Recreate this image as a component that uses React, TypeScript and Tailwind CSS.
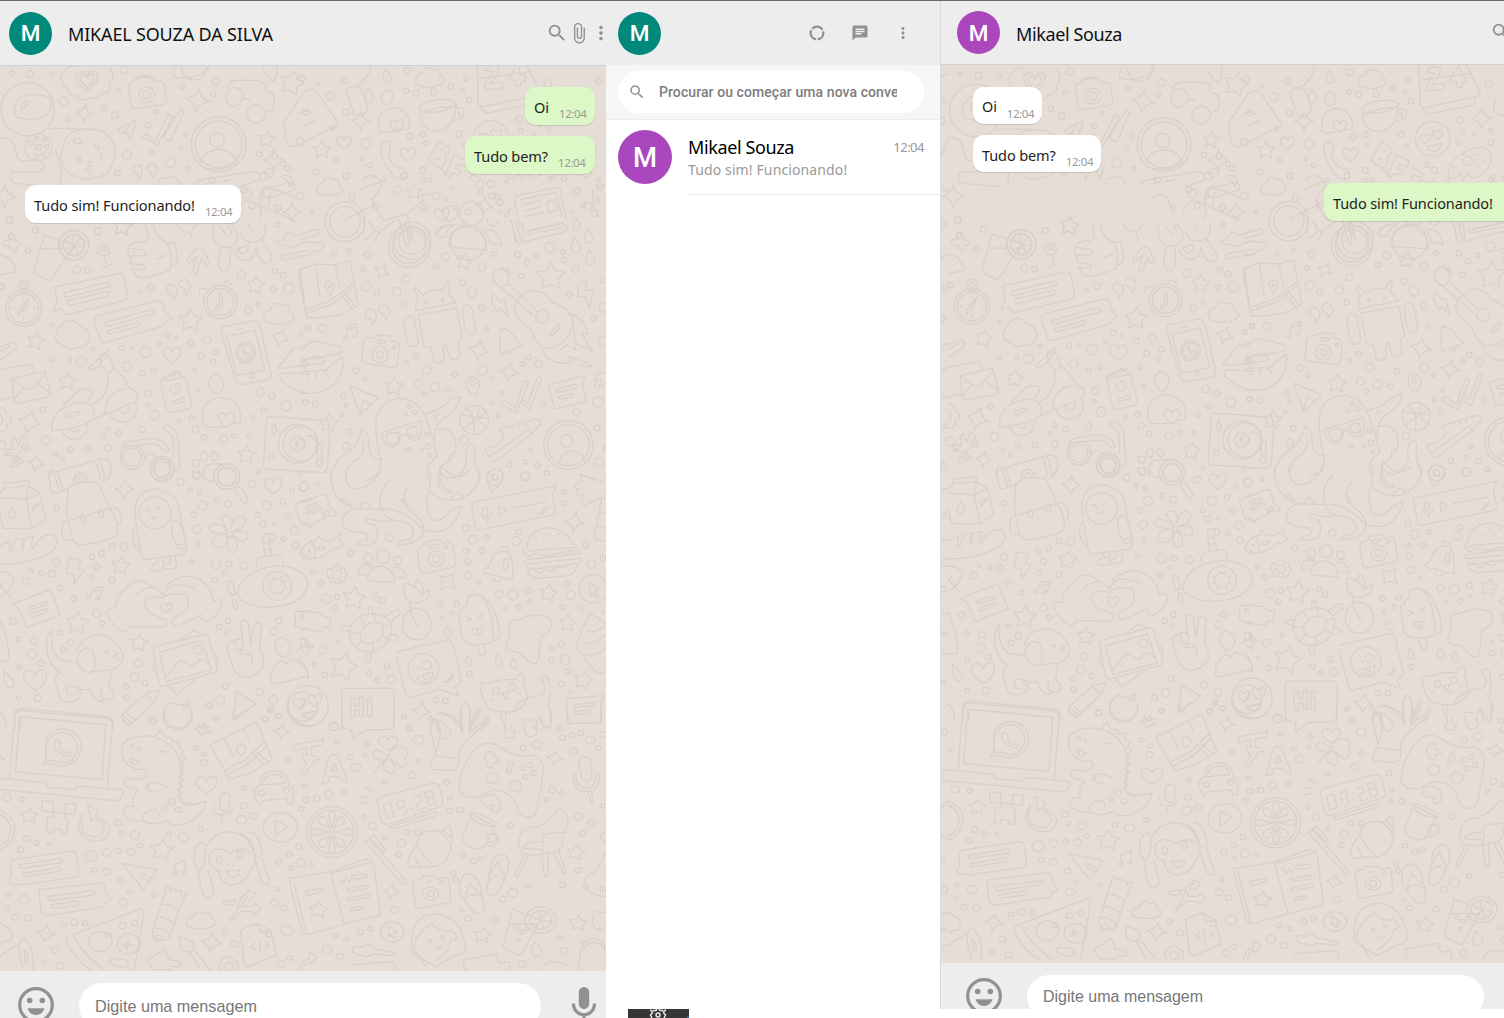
import React from "react";

/* ---------- doodle helpers ---------- */
const pt = (x: number, y: number, r: number, a: number) => `${(x + r * Math.cos(a)).toFixed(1)} ${(y + r * Math.sin(a)).toFixed(1)}`;
const star = (x: number, y: number, r: number, rot = 0) =>
  "M" + Array.from({ length: 10 }, (_, i) => pt(x, y, i % 2 ? r * 0.52 : r, ((i * 36 - 90 + rot) * Math.PI) / 180)).join("L") + "Z";
const spark = (x: number, y: number, r: number, rot = 0) => {
  const a = (d: number) => ((d + rot) * Math.PI) / 180;
  let d = "M" + pt(x, y, r, a(-90));
  for (let i = 0; i < 4; i++) d += `Q${pt(x, y, r * 0.25, a(-45 + i * 90))} ${pt(x, y, r, a(i * 90))}`;
  return d + "Z";
};
const heart = (x: number, y: number, s: number) =>
  `M${x} ${y + s}C${x - s * 0.7} ${y + s * 0.6} ${x - s * 1.2} ${y} ${x - s} ${y - s * 0.5}C${x - s * 0.7} ${y - s} ${x - s * 0.1} ${y - s * 0.8} ${x} ${y - s * 0.3}C${x + s * 0.2} ${y - s} ${x + s} ${y - s} ${x + s} ${y - s * 0.3}C${x + s} ${y + s * 0.2} ${x + s * 0.5} ${y + s * 0.7} ${x} ${y + s}Z`;
const drop = (x: number, y: number, s: number) =>
  `M${x - s * 0.2} ${y - s}Q${x + s * 0.7} ${y} ${x + s * 0.6} ${y + s * 0.4}A${s * 0.6} ${s * 0.6} 0 0 1 ${x - s * 0.6} ${y + s * 0.4}Q${x - s * 0.6} ${y - s * 0.2} ${x - s * 0.2} ${y - s}Z`;
const cloud = (x: number, y: number, s: number) =>
  `M${x - s} ${y + s * 0.5}Q${x - s * 1.1} ${y - s * 0.2} ${x - s * 0.6} ${y - s * 0.2}Q${x - s * 0.3} ${y - s * 0.9} ${x + s * 0.2} ${y - s * 0.5}Q${x + s * 0.7} ${y - s * 0.6} ${x + s * 0.7} ${y - s * 0.1}Q${x + s * 1.3} ${y + s * 0.3} ${x + s * 0.6} ${y + s * 0.6}Q${x - s * 0.2} ${y + s * 0.9} ${x - s} ${y + s * 0.5}Z`;

type Patch = { t: string; dots: string; paths: string[] };

const PATCHES: Patch[] = [
  {
    t: "translate(0 0) scale(.3333)",
    dots: "35 220 7,91 222 10,155 222 6,371 210 11,191 303 13,312 323 8,355 272 6,344 345 10,204 359 7,467 336 6,548 261 7,648 243 11,640 283 7,443 376 8,381 465 14,457 458 7,512 488 15,543 445 6,352 519 9,562 505 6,556 406 6,778 463 8,824 469 9,850 492 7,807 519 14,743 581 13,440 285 24,440 285 12,83 328 80,656 433 82,656 433 70,651 420 22,115 442 40,115 442 9,95 430 6,110 415 6,132 420 6,140 440 6,130 462 6,110 467 6,28 660 10,294 694 10,221 735 45,221 735 32,32 710 8",
    paths: [
      "M62 290Q95 275 150 292Q165 320 135 350Q95 365 50 352Q30 325 62 290M65 330Q62 308 80 302Q90 312 65 330",
      "M188 250Q175 225 195 212Q205 195 225 200M330 205Q350 235 328 250Q335 280 305 280Q295 300 270 292Q250 310 230 288Q205 290 205 265Q185 262 188 250",
      heart(262, 240, 32), heart(262, 240, 20),
      "M385 260Q383 248 400 246L405 235Q440 228 460 235L465 245Q490 238 494 255L500 300Q500 312 488 314L410 326Q395 328 393 315ZM412 240L410 230L450 226",
      "M545 200Q548 240 585 240Q615 240 620 200M530 197Q510 225 530 233Q590 240 625 205Q630 190 620 180",
      spark(592, 300, 36, 8), spark(254, 340, 26, 8),
      "M352 388L410 360L392 416L375 395L365 403ZM375 395L388 375",
      "M425 410L440 402L465 425L505 342L520 348L472 435ZM490 410L540 328L552 334L512 425L488 412",
      "M790 205Q795 230 823 244Q835 215 830 190",
      "M690 245Q760 235 790 248Q805 260 795 268M700 242L680 262M800 275L812 275L822 295M750 300Q738 290 730 300M800 335L818 330Q828 300 820 280M697 262Q722 262 730 285Q725 315 700 320Q675 312 677 285Q683 265 697 262M768 315Q795 318 798 342Q792 366 767 370Q740 362 740 340Q745 318 768 315",
      "M190 440Q178 465 187 490Q195 520 225 528Q255 545 285 533Q325 530 335 495Q352 465 340 430Q325 395 290 390Q250 382 220 395Q190 410 190 440",
      star(800, 418, 26, 8), star(875, 250, 38, 15), spark(14, 590, 34), star(368, 680, 30, 8),
      "M150 385Q250 385 285 390M0 415Q40 400 50 465Q45 490 115 480Q145 500 120 515L35 515Q20 540 45 550L150 560M165 450Q190 500 180 555",
      "M220 420Q240 410 248 425Q225 440 220 420M285 432Q295 425 298 445Q285 450 285 432M232 470Q245 470 245 485Q232 490 232 470M265 487Q275 480 275 500Q262 500 265 487M300 460Q310 465 300 480M255 510Q270 505 275 520",
      "M400 515Q395 490 420 497Q435 520 415 540Q420 525 400 515M440 510Q440 490 463 492Q480 515 455 535Q460 515 440 510",
      "M600 500Q600 455 656 448Q700 450 712 490Q660 520 605 500",
      "M580 555Q590 540 620 537L760 515Q785 515 780 540L720 560M620 552L650 545M660 545L690 540",
      "M780 590Q785 560 805 560L900 600M780 590L780 615L890 665M820 568Q800 590 808 620",
      "M480 555Q470 530 500 535Q520 520 530 540Q545 545 535 555",
      "M845 530Q850 520 870 530Q890 545 870 560Q870 545 845 530",
    ],
  },
  {
    // right half of the top band
    t: "translate(440 0) scale(.3333)",
    dots: "408 578 11,152 552 11,171 590 8,181 607 9,121 577 7,16 597 6,30 640 22,95 640 36,330 538 7,372 535 8,480 560 9,470 600 7,465 640 10,475 243 8,200 645 6,430 615 7",
    paths: [
      "M225 600Q222 590 235 587L340 563Q358 560 362 572L378 660M225 600L238 680M240 600L340 578Q350 578 352 590L366 650M250 615L300 603M255 632L305 620M258 650L310 637M320 605L345 600L352 632L328 638ZM205 640Q205 625 225 622M460 570Q450 610 470 640M470 565L498 552M0 505L20 520",
    ],
  },
  {
    t: "translate(356.5 -2.5) scale(.338)",
    dots: "150 217 10,279 264 8,324 240 7,333 304 8,315 276 6,148 277 7,176 283 9,158 410 9,197 404 8,204 431 6,303 403 9,320 438 6,28 432 15,17 476 6,40 496 7,196 511 9,198 542 6,481 361 10,487 394 7,475 427 7,566 254 11,524 404 5,572 392 7,573 427 9,398 416 52,503 482 14,380 495 7,403 510 9,580 532 6,165 720 55,165 720 40,330 725 52",
    paths: [
      drop(90, 230, 20), drop(38, 288, 20), drop(228, 278, 14),
      "M75 290Q90 262 108 285Q110 315 90 318Q70 312 75 290",
      cloud(218, 235, 42),
      "M357 195L360 315Q362 325 380 322L530 290Q545 285 538 270L500 195M360 240L512 220M365 320L375 335Q378 345 395 340L520 315Q530 310 525 295",
      "M378 215Q400 190 420 205Q425 225 395 255L430 250Q440 265 425 270L380 272Q375 250 405 220ZM450 240L478 195L485 230L498 230L500 248L485 250L485 262L472 262L470 248Z",
      "M187 335Q190 390 230 395Q290 395 296 315M187 335Q180 310 240 302Q290 298 296 315Q250 350 187 335M195 345Q230 320 292 322M296 330Q318 320 318 340Q318 365 285 362M300 340Q308 335 305 350",
      "M65 380Q62 330 110 325Q155 330 158 380Q155 395 135 390L80 400Q65 400 65 380", heart(120, 378, 20),
      heart(376, 415, 15), heart(413, 403, 15), "M382 440L425 430Q420 455 400 455Q385 450 382 440",
      spark(545, 354, 32), spark(12, 364, 28),
      "M75 430Q100 415 100 450Q90 460 105 490Q115 505 135 505Q155 515 145 535Q120 550 90 500Q65 460 75 430", heart(152, 462, 22),
      "M245 425L275 445Q280 460 262 468Q270 495 245 505L212 480ZM245 450L255 452M235 475L247 480M290 465L328 485L322 500L298 492L292 505L310 515L305 525L285 520L275 532L262 525ZM335 500L370 520L365 532L340 525L335 540",
      "M445 520Q450 470 510 450Q560 430 573 465Q575 520 520 535L505 520L490 540L478 520L465 535Q440 540 445 520M455 500L470 500M525 465L535 460M545 480L555 485M530 500L540 498M485 465L495 462",
      "M590 295Q575 310 585 335Q600 350 612 345M0 265Q45 230 42 195",
      "M20 540Q30 520 55 530Q80 545 75 560L45 600L60 610M10 570L30 560L75 545M0 640Q30 640 20 700M45 600L80 660L150 640L165 720M150 640L200 600L190 585L215 580M60 610L-30 655",
      "M140 670L165 715M240 700Q245 675 285 672M460 668L470 720M490 668L495 720M510 690L612 665",
    ],
  },
  {
    t: "translate(0 220) scale(.3333)",
    dots: "28 3 10,106 30 9,84 91 8,294 34 10,231 149 11,262 151 9,420 216 6,453 203 10,724 164 12,825 153 8,850 166 9,820 207 8,866 205 16,745 271 10,775 253 6,834 15 7,6 200 8,156 314 6,244 424 15,208 420 6,155 419 7,279 387 6,366 384 8,397 382 5,437 397 16,381 440 13,426 460 8,461 450 7,502 345 8,478 370 6,528 353 4,572 370 9,621 360 12,603 409 9,648 396 8,640 425 7,584 450 6,594 509 6,445 521 10,443 554 6,464 586 14,538 603 6,575 594 8,586 627 10,611 653 8,671 658 12,702 648 6,747 648 6,782 516 12,816 529 9,859 558 15,916 547 8,791 570 8,758 594 7,923 324 8,902 342 7,139 661 13,129 569 8,324 684 10,357 639 8,323 626 6,310 651 6,426 629 9,263 687 8,212 689 8,167 702 7,189 717 6,71 265 54,71 265 44,71 199 18,71 199 8,222 76 44,222 76 32,661 246 50,661 246 40,737 398 30,737 398 23,397 712 36,397 712 27,485 745 36,485 745 26,757 468 6,815 711 8,893 671 58,893 671 22,893 671 4,680 770 38,680 770 28,775 755 6,311 90 18,311 86 7,5 675 13",
    paths: [
      "M12 62L30 60L28 42Q38 35 45 48L48 64L62 66Q65 76 50 78L50 90Q40 100 34 88L30 78L12 78Q5 70 12 62",
      "M133 45L222 75L155 178Q150 185 140 180L105 162Q100 155 103 145ZM125 87L212 87M222 76L245 50M222 76L254 80M222 76L238 104M222 76L212 106M222 76L215 44M222 76L195 60",
      "M55 275L85 238L78 262L55 290ZM62 260L78 266M71 232L71 242M71 290L71 300M35 265L45 265M100 265L108 265",
      "M435 14Q455 60 430 65Q390 65 385 85Q380 110 395 112M392 85L432 92Q445 105 432 108L392 108Q385 130 398 132L430 135Q440 145 430 150L395 145L412 170L430 175Q455 170 510 150L515 110Q510 80 500 70Q465 50 460 14M500 70L525 68L533 120Q530 138 515 138M470 118L500 105",
      "M530 15Q540 35 570 38L578 60M590 15L578 30M312 105L322 140L335 132M322 140L305 142",
      "M562 118L590 85Q605 80 612 90L628 128Q625 140 615 132L605 115L590 160Q580 165 580 150L590 110L570 128Q560 130 562 118",
      "M640 15Q630 60 660 80Q700 90 712 60Q715 30 690 10M660 20L680 45M685 15L695 40M722 40Q735 80 780 60Q800 50 795 10M745 10L755 30M700 90Q710 120 740 122Q765 115 770 85M710 88L745 75Q748 100 725 102ZM660 85L655 130Q660 160 680 155Q695 145 690 90M785 60L815 105Q820 130 798 130Q780 125 765 85",
      "M930 35L885 48Q860 25 850 60Q830 60 830 70Q835 80 855 75Q880 90 900 70L930 68M930 90L850 105Q835 115 850 120L930 105",
      "M172 200L358 160Q370 158 372 170L383 225Q385 238 372 242L205 283Q190 285 185 265L160 275L172 245L166 212Q165 203 172 200M195 218L322 188Q335 190 328 200L200 232Q188 228 195 218M205 242L320 215Q332 218 325 228L210 256Q198 252 205 242",
      "M290 288L475 242Q485 240 490 252L497 275L516 295L497 305Q498 318 485 320L315 368Q303 370 300 355L283 305Q282 292 290 288M315 308L455 268Q468 272 460 282L322 318Q308 315 315 308M325 332L412 307Q425 312 415 320L330 342Q318 340 325 332",
      "M500 215Q495 195 515 193Q545 205 520 242Q520 225 500 215M537 200Q535 178 555 178Q585 195 558 225Q560 205 537 200",
      "M600 225Q590 205 620 205M670 190Q680 175 695 195M658 222Q664 218 665 226L668 255L650 272Q640 272 648 262L658 250Z",
      star(767, 196, 28, 5), star(571, 302, 36, 3), star(107, 363, 28, 12), star(202, 485, 27, 5), star(740, 705, 28, 5), star(367, 20, 30, 8),
      "M185 315Q210 285 235 315Q275 330 268 360Q255 385 225 383Q210 395 190 375Q155 365 170 340Q172 325 185 315",
      cloud(838, 280, 46),
      "M897 150L930 138M897 150Q895 170 920 290L930 295M0 105Q45 115 48 155L0 165M0 380L40 367Q55 375 45 390L0 420M0 395L32 378",
      spark(841, 353, 28, 20), spark(88, 606, 36, 15), spark(108, 730, 26, 10), heart(517, 403, 26),
      "M668 320L760 303Q775 303 780 318L813 460Q815 475 800 480L725 494Q710 493 705 480L665 340Q662 328 668 320M680 350L765 330L795 450L710 468ZM708 330L730 325M722 420L718 432L732 428M728 388Q728 410 750 412Q755 400 745 398Q735 408 733 385Z",
      "M833 445L880 385Q900 380 930 372M833 445Q870 445 930 430M845 458Q830 470 850 485Q880 515 930 520M845 458Q880 460 930 462M905 415L915 440L930 430M900 430L925 455",
      "M0 450L90 433Q100 433 103 455M35 475L135 453L152 520Q150 530 140 533L55 550Q45 550 42 538ZM35 475Q70 510 90 508Q110 500 135 460M42 538L72 503M110 490L152 520M0 540L40 530",
      "M0 563L15 565L18 580L32 590L35 605L20 610L22 625L10 635L0 635M0 580Q15 600 0 615",
      "M265 445L325 390L325 400L295 440L270 452ZM300 405Q320 395 335 425Q345 450 330 458Q300 450 300 405M322 458Q330 530 280 553M340 445Q370 465 388 503M388 503L410 515Q420 530 405 545L315 583Q315 520 370 507M190 555L235 512Q265 500 277 512Q278 530 262 545M155 620Q160 560 240 547Q285 545 283 590Q270 620 155 632ZM200 585L235 573Q245 577 235 584L205 594Q195 592 200 585M185 630Q195 660 230 658Q265 645 262 612M283 597L315 583M190 555L195 560M328 580Q335 607 372 607Q410 600 411 562L405 545M355 562Q355 580 372 581Q388 575 385 558M208 628Q215 640 235 632L238 620",
      "M480 480L545 455M480 480L500 575Q505 580 515 577L570 565Q577 560 574 550L555 470L485 485M485 475L530 452L545 468M515 495Q505 510 520 520Q540 525 540 505Q540 490 525 492L528 505M518 545L550 533Q560 540 550 546L520 553Z",
      "M625 490Q630 465 650 463Q675 475 670 495Q668 515 655 522Q630 515 625 490",
      "M607 600Q600 540 665 533Q725 540 722 600Q722 612 705 610L680 620L625 622Q608 620 607 600", heart(680, 598, 24),
      "M800 595Q800 590 815 590L930 597M800 600L790 735Q792 750 810 748L930 755M822 608L815 630L822 648L830 630Z",
      "M365 685Q370 665 400 663L450 655Q490 655 508 690Q500 702 490 690Q475 670 450 672L372 680M365 690L363 720M435 715Q450 690 470 712M488 620Q495 610 515 622Q540 640 535 680L540 745Q530 755 518 748M490 625L515 645Q522 665 520 710",
      "M12 705L30 700L12 695L15 685L40 690L35 658L45 652L55 678L65 650L75 650L90 690L60 695L50 710L72 725L35 742L30 735L45 708ZM72 670L65 685L80 685ZM55 708L42 728L60 722Z",
      "M145 780Q140 765 160 758L305 717Q330 715 333 745Q335 765 315 775M285 725Q300 750 300 780M300 720Q312 750 312 778M220 780Q222 760 240 760Q260 762 262 780",
      "M605 700Q600 725 618 725Q632 705 615 695ZM638 695Q630 710 642 722Q660 722 655 705ZM578 720Q572 738 590 742Q605 735 595 720ZM578 755Q572 770 590 780Q605 770 600 760ZM610 780Q605 730 640 732L670 732",
    ],
  },
  {
    t: "translate(300 220) scale(.3333)",
    dots: "102 102 7,149 94 7,203 106 10,190 149 7,199 200 14,230 221 8,290 215 13,319 176 11,311 252 8,25 324 7,67 325 12,407 139 8,435 110 12,487 188 9,516 218 15,546 263 9,561 326 6,547 142 11,582 102 7,653 103 9,682 127 8,709 108 7,749 83 15,788 96 7,793 121 8,827 147 11,665 168 8,807 223 8,882 294 8,910 180 8,912 262 15,911 363 14,348 410 8,319 429 6,380 450 13,169 452 9,194 476 6,354 492 12,404 502 14,444 508 8,464 462 8,373 523 7,548 451 14,576 473 6,667 432 7,685 412 8,716 432 11,604 518 6,577 548 6,597 587 7,729 550 7,893 546 16,830 577 11,891 624 9,897 728 13,917 687 7,130 527 8,138 555 6,125 585 6,149 636 8,138 679 11,17 547 7,46 551 9,492 660 12,692 691 6,628 734 8,676 725 7,713 735 8,741 760 7,676 768 13,328 560 6,316 582 6,345 577 7,380 642 6,385 679 8,365 691 5,390 707 5,135 5 60,135 5 46,327 80 62,327 80 50,240 404 24,240 404 10,282 382 5,379 247 4,428 238 4,727 290 20,523 600 43,805 675 74,805 675 62,800 662 19,0 671 13,2 671 52,586 772 24,586 772 9,516 490 7,58 730 10",
    paths: [
      "M0 42L50 28Q62 35 52 45L0 58M0 75Q20 60 40 68Q65 65 72 78Q60 95 40 95Q20 115 0 105",
      "M298 0L318 75Q325 82 328 72L315 0M205 5Q235 30 215 45L195 60M225 65L235 40L285 0M215 25L240 40",
      "M405 45Q415 10 465 15Q440 25 435 50Q415 55 405 45M445 70Q450 20 505 20Q560 35 560 90L450 82ZM553 30Q595 25 605 75L570 70Q565 50 553 30M560 0Q570 25 590 15L595 0",
      "M632 0L650 65Q655 72 665 68L795 35Q805 30 803 15M645 0L665 62M680 35L790 10Q800 15 788 22L688 42Z",
      drop(828, 75, 24), drop(866, 48, 20), drop(870, 112, 22), drop(830, 12, 18),
      "M0 150L45 132L105 135L150 123L175 258L120 285L70 293L20 293ZM45 132L60 230M105 135L120 200M15 270L95 240L160 190M20 280L100 250L165 198M125 225L155 265M132 218L168 262M75 200Q75 185 88 184Q102 186 103 202L90 225ZM85 200Q88 193 92 200Q90 207 85 200",
      spark(245, 154, 24, 25), spark(537, 391, 32, 10), spark(627, 456, 30, 10), star(493, 125, 26, 10), star(752, 170, 44), star(282, 500, 30, 4), star(85, 610, 30, 5),
      "M578 222L602 245L612 238L625 290L600 265L592 275L575 245ZM835 195L860 180L858 210L882 212L868 262L855 230L835 230Z",
      "M340 208Q345 200 353 208L370 225Q400 205 430 210L438 190Q448 180 450 195L445 220L468 248L348 272Q345 240 355 230ZM355 285L470 265L488 355L475 365L480 405Q470 425 450 415L440 378Q430 370 430 385L432 420Q420 435 402 425L392 382L372 378ZM312 300Q325 280 342 295L355 365Q350 385 330 378Q318 370 312 300M487 262Q500 245 515 262L528 325Q525 348 505 342Q492 335 487 262",
      "M195 290Q195 265 215 267Q245 285 215 314Q220 295 195 290M235 275Q235 252 255 255Q285 270 255 300Q260 282 235 275",
      "M140 350L142 320L172 310L170 342M142 330L170 320M140 350Q130 345 130 357Q140 365 140 350M170 342Q158 340 160 350Q170 355 170 342",
      "M195 355L225 352L228 345L268 348L272 362Q298 365 298 378L292 435Q290 444 280 443L195 430Q185 428 185 418L190 365ZM235 360L258 362Q260 370 248 370L235 370Z",
      "M0 390Q20 380 25 370Q40 360 55 365L120 380Q128 390 120 400L70 410L40 410L0 428M20 415L72 415Q80 430 55 432L0 440M0 455L80 450Q110 420 128 410Q135 450 105 490Q60 530 0 518M10 412L20 435M55 405L60 415M20 458L22 480M45 455L48 475M70 450L85 470",
      "M578 170Q580 145 605 145Q630 160 625 190L610 200Q585 200 578 170M605 140L635 165M580 185L605 205M620 140L630 160M625 190L715 278M605 205L698 285M680 218Q700 205 735 220L755 245Q820 270 820 310Q800 385 740 385Q710 380 690 325Q635 285 645 260Q650 235 670 225M750 340L775 312Q785 318 775 330L758 345Q748 348 750 340M800 280Q850 285 865 345L845 335Q860 375 880 395L830 370L825 388L800 375L780 390M725 388Q740 430 800 430L820 420L800 408Q850 420 880 440L840 438M820 300L825 370",
      "M600 350Q595 325 622 330L640 345Q650 365 670 375L602 402Q598 370 600 350M602 335Q600 320 615 325M625 400Q640 405 645 388",
      "M510 520Q485 480 515 470Q540 475 537 500L528 523ZM150 498L235 533L180 585ZM180 585L190 540L215 555",
      "M603 545L615 540L645 565L672 485Q680 478 685 490L650 578L605 555ZM670 540L682 550L712 475Q722 465 724 478L690 568L668 552",
      "M745 495L855 467L848 490L858 545L765 567ZM770 507L825 493Q835 498 828 505L778 517Q765 515 770 507M775 530L815 520Q825 525 815 531L780 538Z",
      "M885 500L890 460L918 458M885 480L905 480L895 505L918 488",
      "M485 585L560 595M500 565Q530 590 520 640M540 560Q520 600 560 620M490 625Q530 600 560 575",
      "M600 628L640 615L705 597Q725 597 722 612L690 645L590 722Q580 728 572 718L555 690Q560 680 580 682Q610 665 612 650ZM570 710L690 625M640 615L635 628M658 610L655 624M678 605L675 618M690 635L697 645",
      "M778 728Q785 695 825 692Q850 700 853 725",
      "M242 718Q225 650 228 600Q240 535 310 535Q360 545 380 600L400 660L412 710Q370 735 385 780M245 638L362 603Q368 640 358 658Q330 670 318 640L302 645Q300 680 270 682Q245 670 245 638M258 645Q280 632 297 640Q300 672 275 674Q258 668 258 645M320 628Q335 615 350 622Q358 645 345 652Q325 650 320 628M315 690Q325 675 333 690Q325 700 315 690M185 627Q210 640 205 670Q210 730 245 715M185 630Q180 655 155 690Q95 720 92 780M245 715Q240 780 200 780M190 665Q195 700 175 715Q140 730 138 780M375 582Q420 570 440 550Q460 530 480 530Q480 560 445 585Q400 610 405 660M405 630Q470 615 468 690Q460 720 420 740L415 780M515 670Q490 685 500 730Q480 780 445 775Q420 765 420 740M515 670Q530 680 522 720L540 780M408 600Q400 580 420 585M462 700Q440 700 450 725M440 755Q425 730 418 750",
      "M0 598L85 603M90 630L82 745Q80 758 65 757L0 755M22 650Q30 640 45 660L55 675L50 668M52 670L65 670L65 720L52 720ZM80 590L90 630",
      "M840 765L890 780",
    ],
  },
  {
    t: "translate(0 470) scale(.3333)",
    dots: "169 113 8,169 276 11,181 353 8,156 311 10,124 309 7,94 303 6,77 333 10,222 386 8,275 325 7,289 290 9,275 260 8,305 251 8,336 229 8,372 231 12,336 330 9,290 432 12,306 460 8,182 488 7,213 518 10,191 539 8,39 454 10,56 508 7,102 514 10,96 553 14,122 580 9,56 592 7,56 684 7,113 684 10,542 36 10,570 61 7,598 68 7,607 107 14,650 90 7,684 102 10,582 134 8,592 178 13,595 223 7,575 276 6,648 282 14,686 282 9,644 331 8,674 307 6,731 286 12,757 41 10,801 106 14,848 95 8,864 136 8,883 181 12,887 227 10,850 206 7,789 161 10,773 135 7,821 160 3,911 50 14,876 61 7,658 471 8,685 452 8,681 486 6,821 484 11,837 452 9,414 580 12,403 621 13,435 640 8,378 649 8,381 681 8,457 751 10,627 706 9,661 690 13,649 745 7,677 648 9,779 666 11,820 689 13,812 717 7,834 738 8,795 747 8,465 129 48,832 348 43,832 348 22,907 440 6,320 546 4,487 0 35,487 0 24,680 20 38,680 20 28,909 710 44,688 194 9,593 540 13",
    paths: [
      "M12 40L85 32L88 50L120 70L137 148L97 176L12 175Q5 170 0 130M15 40L12 55L0 70M12 55L85 48L78 88L97 176M78 88L115 72M0 83L78 88M97 112L118 100Q118 110 97 122ZM37 110L27 130Q27 145 38 146Q50 143 48 130Z",
      "M205 55Q240 25 295 40L330 115Q360 160 350 195Q335 212 240 225Q220 222 215 200L200 130ZM210 150L330 115M243 138Q250 130 256 138L256 155Q248 160 244 153ZM296 122Q303 115 309 122L310 140Q302 145 297 138ZM205 150Q180 155 188 200Q192 215 218 208M340 115Q360 110 365 150Q365 165 352 165M148 20Q145 0 160 0M148 20Q150 75 165 70L205 55M172 5L190 62M160 5L180 65M222 38Q225 10 242 10Q260 12 262 35M232 35Q235 20 243 20Q252 22 252 34M333 0Q335 25 310 35",
      spark(374, 58, 30), star(362, 288, 29, 8), star(232, 460, 36, 5), star(417, 519, 28, 5),
      "M0 283Q100 280 155 245Q185 215 160 195Q120 190 100 235Q90 240 100 200L75 205L68 240Q60 245 70 205L45 210L35 245Q25 255 30 215L0 225",
      "M208 262L243 268L235 295L253 300L222 342L222 312L200 310Z", "M280 355L310 350L300 385M278 355L272 380M272 380Q258 370 258 383Q270 390 272 380M300 385Q285 372 287 388Q298 392 300 385M280 365L306 360",
      "M405 130Q405 60 470 57Q530 70 537 110L560 235Q560 250 545 255L440 268Q428 268 425 255L410 170ZM410 170Q395 175 400 210Q405 240 425 250M412 230L425 232M515 170Q510 150 530 152Q545 155 560 220L530 225Q515 200 515 170M530 225Q530 240 555 232M470 268L475 278Q450 282 455 300Q470 305 490 300L490 265M510 262L512 278Q490 285 490 298L525 295Q535 290 525 260M437 120Q445 115 452 125M465 118Q475 110 483 118M448 140Q460 150 470 138",
      "M683 178C655 140 660 137 678 137C700 137 700 165 692 175C705 135 720 132 735 145C745 165 725 175 702 185C745 175 748 195 740 208C725 222 710 205 700 195C718 225 715 240 700 248C680 250 680 220 686 202C670 240 655 238 640 228C630 210 650 195 675 190C640 192 625 185 628 172C635 155 660 162 683 178M672 178L684 184M706 180L696 188M706 210L696 200M684 208L688 198",
      "M712 370Q725 300 830 288Q920 290 925 345Q910 410 800 412Q720 405 712 370M770 293Q765 270 780 262L835 255Q850 260 850 287M795 260L787 200Q800 185 822 192Q830 205 820 212L808 215L815 255M790 220L808 217M792 240L810 236M808 193L810 210M685 335Q695 325 700 345L705 372Q700 378 690 370Q680 350 685 335M705 385L715 410Q710 425 700 410L700 385M690 380L715 370M822 320L825 328M845 320L843 326M860 332L854 337M862 358L855 354M848 375L844 368M820 376L822 369M803 358L810 355M802 334L808 338",
      "M345 415Q350 365 405 335Q435 325 460 355M345 415Q320 410 320 430Q340 475 375 487Q380 485 390 470L490 472Q510 465 500 450L450 430Q425 405 440 388Q460 375 490 385Q495 340 540 345Q580 350 588 362M410 375Q430 350 465 352L490 375M500 345Q550 305 590 325Q635 345 640 395Q660 380 668 400Q655 440 620 455Q600 450 605 435L530 468Q515 465 515 450L560 420Q570 395 560 375Q530 365 495 378", heart(500, 412, 16),
      "M0 305Q35 305 43 330Q40 350 0 385M0 345L35 385M10 335L0 350M38 402L150 358L182 435L80 473L60 420ZM85 412L138 395Q145 400 135 406L90 420ZM95 432L140 416Q147 422 138 427L98 442Z",
      "M155 482Q150 560 190 572L232 577M155 482Q135 500 142 550Q150 590 180 605Q165 620 165 635L178 680Q185 700 220 695Q245 685 240 668L225 660M230 545Q240 500 300 495Q350 500 370 560Q365 590 335 600L280 605M240 545Q260 525 278 540Q290 580 282 600Q265 615 250 600Q220 575 240 545M335 600L325 650L340 665Q345 685 330 688L300 695Q270 680 270 648M200 655Q205 640 245 660L270 658M200 655L205 678L222 678M300 650Q310 670 300 680L322 690M340 545L355 550L340 560L360 570",
      "M465 530L612 493Q622 493 625 502L652 595Q652 605 642 608L490 649Q480 648 478 640L460 548Q458 535 465 530M478 547L605 512L635 600L500 635ZM500 620L540 570L580 590Q595 565 615 570L630 588M540 510L580 480L605 493M465 570Q455 585 460 600L472 612M505 645L530 673L588 628M642 545L655 565L650 578",
      "M683 545Q675 520 695 515Q715 500 728 510L722 455Q735 445 745 460L752 520L762 465Q775 450 785 465L778 535Q795 565 790 590Q770 620 735 622Q700 615 695 580ZM705 510Q725 500 732 525Q725 545 710 540ZM720 550L755 555L755 580M755 550Q725 530 720 550",
      "M825 530Q825 505 845 502Q870 510 872 535Q868 555 850 562Q828 555 825 530M812 635Q810 590 845 572L860 582L870 567Q915 575 925 615Q925 622 815 643ZM890 540L905 535L900 505L918 510L920 530L930 530",
      heart(820, 45, 26), heart(106, 628, 34), heart(900, 700, 18), "M12 602L42 635Q45 655 25 653Q10 645 12 602M0 450Q25 500 28 570L0 575M0 725Q20 740 18 780",
      "M365 735L440 668L478 660L465 695L395 760Q380 770 365 745ZM440 668Q450 690 465 695M380 730L405 750M370 737L395 758",
      "M500 710Q515 690 535 705Q570 695 577 740Q570 770 545 775L500 770Q480 735 500 710M550 715Q550 695 567 695Q570 715 550 715",
      "M708 665L768 700L702 752ZM595 760L605 775L630 770",
      "M45 780L45 735Q48 715 70 715L320 740Q340 745 340 765L338 780M60 780L62 740L318 765L315 780",
      "M705 60Q715 45 725 55L745 88Q740 105 730 98ZM575 5Q580 30 595 25Q605 15 595 0M610 0Q610 35 640 35M887 100L930 85M887 100Q885 115 905 165L930 165M930 215Q900 235 905 250L930 265M887 425L930 422M887 425L885 470L930 478",
    ],
  },
  {
    t: "translate(300 470) scale(.3333)",
    dots: "12 50 13,54 40 6,676 20 13,741 10 8,793 65 7,793 100 7,857 224 9,875 282 13,909 264 8,802 341 8,812 375 14,787 412 8,649 213 13,657 186 8,518 209 13,561 202 7,498 174 10,498 244 8,546 242 8,503 275 9,506 317 11,537 339 5,597 373 11,639 375 15,685 363 9,687 394 5,657 412 8,615 415 5,269 203 11,152 250 9,62 339 8,39 307 6,80 387 14,111 380 8,103 414 8,227 376 7,246 391 9,420 403 8,470 401 8,456 428 6,426 445 6,443 486 12,114 515 6,68 540 12,74 614 8,42 583 6,207 610 8,232 630 7,273 628 12,261 589 8,509 612 8,784 523 9,755 536 6,796 569 15,755 571 8,805 603 8,785 641 8,810 664 6,407 690 8,437 692 8,313 740 7,328 775 8,101 768 13,880 357 42,584 22 9,111 314 14,249 260 20,204 265 13,293 271 12,409 266 24,409 266 11,438 231 5,370 597 46,381 585 14,588 663 10,637 652 10,23 708 62,28 242 3",
    paths: [
      "M90 0Q90 95 165 115L240 118Q310 110 370 180Q430 195 455 165Q480 130 485 110Q455 115 440 135Q420 155 395 150Q370 100 385 70Q400 0 380 0M135 0Q135 55 170 58Q220 50 243 0M270 30Q240 50 240 100Q250 145 280 150M325 50Q290 100 340 130Q385 165 365 200Q330 228 290 225Q295 210 330 208Q350 190 330 165Q300 145 245 155L195 145Q195 160 225 165Q240 190 225 218Q200 230 170 225Q170 215 200 210Q210 190 190 188Q125 185 127 155Q130 125 165 115M390 65Q420 95 470 90Q540 70 540 0M415 20Q410 60 440 65Q460 70 455 60Q420 60 420 10M440 0Q470 40 510 0M120 95Q135 75 150 105M180 115Q195 80 212 115M302 95Q310 75 325 110M455 85Q475 50 490 88",
      "M0 100L70 72Q80 72 82 82L90 115L105 125Q115 130 100 140L80 135L75 145L40 160L30 175L22 160L0 155M15 110L50 97Q58 102 50 107L20 118ZM18 128L60 112Q65 118 58 122L25 133ZM70 130Q80 115 90 130L70 142Z",
      "M575 65Q550 20 570 0M575 65Q610 40 610 10L600 0M515 105Q515 98 525 96L768 47L758 75L768 125Q768 132 758 135L540 180Q530 182 527 172ZM635 115L740 95M595 108L620 122L598 137ZM548 115Q555 105 562 115L562 135Q555 143 550 135ZM542 130Q550 155 572 140L575 130M560 147L563 160M712 128L722 133L735 112M724 128L732 130L745 108",
      "M918 38L845 14Q835 18 848 32L825 45Q822 58 838 55Q820 75 838 78L850 75Q840 105 852 108Q880 90 918 82M905 85L883 200Q885 212 918 213M895 130L918 130M890 170L918 170",
      "M682 235Q680 180 745 173Q805 180 815 222Q830 218 828 232L705 240L670 250Q665 235 680 235M670 252L688 262L700 250L740 258L780 248L835 240L840 250L680 270Q668 275 675 283L840 265Q848 270 838 278L690 300L678 290M682 300Q690 325 715 325L800 318Q830 310 835 278M690 300L700 295L715 310L740 298L755 305L770 292L800 290L815 280M705 200L710 205M730 208L735 213M745 190L750 193M760 207L766 210M772 190L778 193",
      spark(824, 156, 30, 8), spark(442, 336, 32, 40), star(745, 370, 28, 10), star(803, 460, 27, 5), star(850, 632, 28, 15), spark(363, 723, 30, 10), star(162, 385, 36, 8), star(130, 590, 44, 15),
      "M0 250Q15 215 50 210L52 195L65 210Q90 215 105 205L120 190L120 215L132 222L115 235L100 235Q60 275 10 265ZM35 212Q50 240 42 265M50 238Q60 225 78 232L68 240L55 240",
      "M85 295L95 298L105 285L115 285L120 295L135 295L135 308L143 315L135 325L132 335L120 335L112 342L102 335L90 335L88 322L80 315Z",
      "M202 325Q210 285 250 290Q285 300 285 338L205 332ZM173 315Q175 285 200 285L215 292L205 315ZM283 293Q315 290 318 325L290 320M195 280L215 285M285 285L300 285",
      "M352 245Q350 235 362 230L378 225L380 215L418 208L428 220L445 215Q455 215 458 228L467 280Q465 290 455 293L372 310Q362 310 360 300ZM388 228L412 222Q420 228 410 233L392 236Q385 235 388 228",
      "M548 303Q570 290 575 265Q590 240 620 245Q642 255 638 330L550 307M605 245Q600 228 615 230Q630 232 627 245M612 270Q618 260 625 265L625 292Q618 302 610 295ZM578 325Q590 345 605 328",
      "M310 345Q335 330 365 375L390 360Q395 395 335 400Q310 390 310 345M340 350L350 330Q370 335 368 370M333 395Q325 430 355 470M338 415Q380 410 392 450Q400 490 365 508Q320 515 308 475Q305 430 335 418",
      "M148 490Q150 440 210 432Q265 430 275 470Q275 530 215 545Q155 550 148 490M180 495Q185 465 220 457Q250 455 250 480Q245 515 205 520Q180 520 180 495M205 435L205 415Q215 405 218 420L218 435M255 440L285 420Q305 415 298 435L270 455M272 490L295 500Q295 515 270 510L262 510M215 545L212 570Q205 580 197 565L200 545M150 485L125 480Q120 465 145 468L155 470M150 490L180 490M170 530L190 510M220 545L218 520M265 510L245 495M270 465L248 470M225 432L225 455M180 445L195 465",
      "M0 20L0 0M0 425L60 428L72 440L93 442L88 475L72 470L65 485L0 478M0 530L15 530L18 505L28 525L42 530L25 540L22 558L8 545M0 565Q28 600 25 625L0 620",
      "M475 428L490 420Q480 410 500 405L505 380Q540 360 570 400Q600 450 600 500Q590 520 520 525Q490 520 485 500ZM540 375Q580 410 580 512M530 528L540 555Q555 565 558 548L552 522M498 440L515 448L500 455M550 430L535 440L550 447M515 478L548 472Q548 490 532 497Q518 490 515 478M530 480L535 490",
      "M628 465Q630 445 650 450L680 440Q720 430 750 445Q765 480 725 500L718 540Q720 580 700 582Q680 575 665 550L625 540Q610 530 628 508Z",
      drop(507, 572, 16), drop(597, 570, 18), drop(642, 580, 16), "M830 410Q840 400 852 420Q840 428 830 410M905 430L918 420",
      "M868 340L900 355L885 362L895 378L888 383L878 368L870 380ZM918 460L870 430L855 465Q835 480 845 495Q820 530 835 545Q870 570 918 535M860 485Q890 490 918 465M845 520Q880 525 918 495M850 560L885 605L918 612",
      "M290 545L445 510Q455 510 458 520L485 635L465 650L475 678L420 658L330 683Q320 683 317 672L288 560M345 595Q355 590 362 598M350 622L398 605Q400 635 375 637Q355 635 350 622M370 618L373 628L383 625L382 613M430 635L442 637L458 610M448 635L462 615",
      "M0 690Q15 680 12 700L0 715M8 735L50 722Q45 745 25 745Q10 745 8 735M135 655L270 655Q282 658 282 670L282 780M125 780L125 665Q127 655 135 655M152 685L165 685L165 708L178 708L178 682L190 682L190 740L178 740L178 720L165 720L165 742L152 742ZM202 702L215 702L215 740L202 740ZM202 685L215 685L215 695L202 695Z", heart(45, 690, 20),
      "M390 780Q395 745 410 750L415 780M410 735Q420 720 460 742Q480 750 485 780M485 780Q475 720 490 700Q505 690 510 720L512 770L530 715Q545 710 540 725L520 780M540 780L560 740Q572 740 565 755L550 780",
      "M540 650Q540 635 555 640L575 638L600 630L648 628Q655 605 670 612Q675 625 672 640L682 680Q680 710 640 725Q590 730 565 715L550 690ZM605 670L625 665L618 685ZM618 685L608 690M618 685L630 688M570 690L580 690M655 670L665 668M640 725Q650 690 700 680Q740 680 735 650L722 625Q735 610 745 625Q755 660 745 700Q755 750 750 780M600 730L620 780M710 780Q705 750 720 738Q735 770 725 780M670 750L700 750",
      "M800 685L910 677L903 700L903 758L805 762Q800 725 800 685M820 705L882 697Q890 702 880 708L823 713ZM823 725L865 720Q875 725 865 731L825 733Z",
    ],
  },
  {
    t: "translate(0 710) scale(.389 .3333)",
    dots: "392 32 8,555 25 6,681 27 8,695 3 7,715 17 7,858 50 11,1039 20 6,1051 55 7,1076 90 13,1075 154 6,943 102 7,866 94 6,900 140 7,939 136 6,915 172 12,740 151 6,989 215 6,1058 196 10,1148 216 8,1156 265 6,782 229 6,786 270 8,814 266 8,845 252 11,886 245 7,775 297 7,937 319 5,958 348 10,989 384 6,1048 367 7,1075 367 8,1032 399 11,1025 434 7,504 114 6,526 132 6,524 158 9,627 234 6,626 288 9,621 329 13,652 319 9,516 357 7,472 382 13,434 373 7,424 295 7,442 275 9,458 300 8,18 263 11,56 268 7,69 386 9,94 399 7,126 400 5,53 420 8,304 339 9,312 368 6,347 375 12,360 407 7,337 425 10,306 423 7,274 428 11,234 438 16,242 480 7,274 485 10,310 512 8,332 547 6,395 554 6,317 577 12,62 569 13,21 554 6,19 596 6,39 622 9,73 624 9,768 410 8,743 433 7,718 456 8,773 459 12,747 473 6,801 464 5,712 538 6,705 578 10,730 594 8,738 662 15,691 673 8,603 701 9,745 744 7,841 720 12,874 739 9,862 678 7,890 688 6,927 666 8,951 656 7,1014 599 10,1155 302 7,1182 300 8,1190 436 7,1217 454 8,1238 447 6,1166 491 7,1312 346 8,1172 510 7,1187 600 6,1203 625 8,1272 630 8,1293 568 9,1319 548 13,1358 526 7,1345 115 8,1380 103 12,1440 55 7,1446 83 8,1470 75 7,1493 70 7,1517 90 12,1475 123 9,1538 115 7,1551 74 9,1420 240 9,1405 268 6,1443 250 6,1487 319 11,1497 371 8,1521 339 9,1446 524 8,1486 480 8,1505 532 7,1550 537 8,1439 685 7,1451 722 10,1497 694 6,1343 762 10,141 720 9,113 757 6,156 768 9,164 644 7,191 637 9,219 640 7,577 667 7,723 762 10,1551 287 7,340 110 5,357 117 5,853 366 6,721 352 44,1107 551 20,1107 551 9,1136 518 5,1265 205 16,1326 228 16,1343 175 7,1363 165 7,1372 190 7,1351 200 7,1390 630 40,1390 630 28,258 694 30,331 702 30,315 648 9,346 640 8,278 677 7,1008 666 30,672 250 8,736 242 8,1107 693 4,1138 681 4,1263 385 13,588 770 12,1328 655 6,1356 655 6,1342 665 6,1333 689 5,407 685 10",
    paths: [
      "M38 0L25 205M38 10Q45 0 60 2L275 25Q290 30 289 45L275 235M50 20L272 45L262 210L40 185ZM0 205L118 218L122 232L195 238L197 228L315 240Q318 270 295 272L0 238M108 165L120 135Q105 65 160 57Q205 60 210 110Q205 165 155 170L130 160ZM120 150Q110 75 160 67Q195 70 200 112Q195 155 160 160L135 150L118 155M140 95Q150 85 155 100L155 118L170 128Q185 120 180 138Q165 140 150 125Q135 110 140 95",
      "M312 20Q320 45 335 45L375 0M420 0Q425 55 460 62Q490 50 495 10M600 0L598 28L630 0M742 0Q755 48 795 48Q835 45 842 0M778 10L810 5Q808 25 795 25Q782 20 778 10",
      "M878 0L880 50Q890 60 905 60L905 90L938 60L1005 58Q1015 50 1012 0",
      "M398 80L412 60L425 82L440 82L442 95L460 95L462 115L475 122L465 135L478 145L465 155L475 165L462 175L475 190L460 200L473 210L458 220L470 230L458 240L468 250L458 260L470 280Q480 290 490 280Q500 290 510 278L530 275Q525 320 470 343Q440 350 430 330Q400 350 370 335Q360 300 400 298Q410 310 408 318M312 120Q315 75 385 78Q440 90 460 140Q470 200 460 265Q480 290 530 275M312 120Q315 165 350 178L375 178Q380 210 350 208L330 205Q315 205 320 225Q325 235 355 238Q335 265 345 290Q318 285 315 305Q320 330 370 335M375 240Q380 210 410 220L430 230M378 222Q380 250 402 245M335 142Q360 155 360 155Q350 165 340 162ZM412 125Q425 120 427 132",
      "M108 272L137 275L135 305L108 303ZM167 280L195 282L192 313L167 310ZM137 305L167 310L165 322L175 325L172 370L158 370L158 358L137 355L135 370L120 368L122 322L137 320Z",
      "M225 285L253 303L245 320Q290 340 280 370Q270 395 240 393Q200 380 202 345L213 310Q205 345 213 365Q230 385 255 378Q275 360 265 345Q255 330 240 325L235 333Z",
      star(75, 318, 24, 5), star(416, 420, 32, 5), star(1241, 676, 25, 8), star(1481, 428, 24, 8), star(1486, 640, 24, 5), star(818, 600, 26, 8), spark(521, 60, 22, 15), spark(724, 65, 22, 10), spark(1006, 545, 22, 10), spark(1426, 145, 22, 10), spark(118, 670, 26, 10), spark(543, 697, 28, 8),
      "M540 105L660 35L700 150L640 190L590 208ZM575 85L600 140M625 55L640 90M580 180L630 150L680 95M588 192L640 160L685 108M650 130L675 160M658 125L690 155M608 115Q610 102 622 104Q634 110 632 122L622 138Q608 130 608 115",
      "M755 105L830 88Q835 100 825 105L798 112L800 135Q825 140 822 150L810 148L785 192Q772 195 775 183L790 160L775 140Q775 130 790 138L787 112L760 122Q752 115 755 105M828 222L845 140Q855 128 868 138L893 210Q890 218 880 213L872 200L848 200L842 220ZM852 182L868 180L860 160Z",
      heart(998, 98, 24), "M1000 138Q1005 105 1040 112Q1055 130 1040 140Q1055 165 1030 172L1002 145M1002 145Q1025 180 1008 190Q985 190 985 160L998 145M998 140L960 188L990 150Q955 150 958 128Q970 110 998 140",
      heart(531, 222, 27),
      "M652 238L668 225Q670 185 705 182Q740 185 742 225L755 240L753 280L740 282L738 265L675 272L668 288L655 262ZM672 225Q680 195 705 193Q732 195 732 220ZM565 262Q575 240 592 255L588 300Q575 310 565 295ZM550 285Q545 315 575 315Q598 310 600 292M570 318L570 335",
      "M708 330L740 350L708 377Z",
      "M788 366A65 76 0 1 0 918 366A65 76 0 1 0 788 366M798 366A55 66 0 1 0 908 366A55 66 0 1 0 798 366M845 318Q842 306 853 305Q864 306 862 318L853 352ZM845 414Q842 426 853 427Q864 426 862 414L853 380ZM812 356Q800 360 800 366Q800 374 812 376L844 366ZM894 356Q906 360 906 366Q906 374 894 376L862 366ZM820 330Q820 316 836 322L848 354L824 342ZM886 330Q886 316 870 322L858 354L882 342ZM820 402Q820 416 836 410L848 378L824 390ZM886 402Q886 416 870 410L858 378L882 390Z",
      "M970 275Q970 265 980 260L1110 220Q1125 218 1130 230L1138 275Q1138 288 1125 292L1000 343Q985 345 980 335ZM1003 350L1122 305Q1128 310 1120 318L1012 357ZM985 285L1003 277L1013 318L995 326ZM1020 277L1035 268L1046 308L1032 317M1020 277L1025 297L1040 289M1052 277L1055 280M1057 294L1060 297M1063 264L1080 255L1085 272L1071 282L1077 302L1093 293M1091 248L1108 240L1120 280L1103 288ZM1096 268L1113 260",
      "M938 230L958 245M925 262L950 260M928 280L950 275",
      "M498 440Q500 400 520 397Q530 400 527 430Q530 455 515 480Q500 475 498 440M530 410Q550 365 590 365Q635 370 650 420Q665 455 640 485Q635 520 595 525Q560 515 565 485Q530 470 540 430Q560 405 592 430Q620 405 645 430M640 365Q665 365 675 430Q670 445 655 435M620 370Q650 390 655 435M510 480Q515 550 530 565Q550 560 550 548L535 480M655 440Q665 500 675 520Q695 530 692 510L672 445M582 485L615 480Q618 500 598 502Q585 498 582 485M585 463L588 468M598 461L600 466M557 450Q557 438 563 438Q572 440 570 452Q568 462 562 462Q557 460 557 450M609 434Q609 422 615 422Q624 424 622 436Q620 446 614 446Q609 444 609 434",
      "M448 465L475 450L478 485M448 465L455 492M455 492Q445 480 443 492Q448 502 455 492M478 485Q465 480 468 492Q475 495 478 485",
      "M30 450L185 423Q195 425 197 435L203 490Q200 502 190 503L50 525L25 520L20 512L30 495Q25 470 30 450M50 465L155 445Q165 450 157 458L55 475ZM58 490L150 472Q160 478 152 484L62 500ZM100 540L260 518Q270 520 270 545L285 570L268 580Q270 590 260 592L120 617Q108 615 105 600ZM122 560L240 542Q250 548 242 555L127 572ZM130 585L200 573Q210 578 200 586L135 595Z",
      "M314 460L402 480L370 540ZM360 500L385 515M360 490Q365 485 390 510",
      "M428 530L480 550L460 600L435 685Q410 700 390 675L412 590ZM435 535L440 545M450 537L452 548M465 545L465 558M412 582Q435 580 460 602M402 620Q425 620 450 640M392 655Q425 650 440 680",
      cloud(518, 630, 38),
      "M573 575L605 570Q610 580 600 585L578 585ZM590 630Q605 620 615 580Q620 550 638 552L635 538L658 550L642 572L635 562Q625 570 622 590L650 590L655 580L672 595L655 615L650 605L620 605L595 632Z",
      "M170 695Q170 680 185 675L365 595Q370 600 370 610L345 780M170 695Q200 760 235 780M190 680Q220 745 270 780M280 755Q285 740 305 748Q330 745 330 765Q310 780 280 755M325 690L328 718M315 702L340 705M318 712L335 694",
      "M460 680L490 690Q505 705 495 720Q480 735 465 715ZM490 728L515 780M500 722L540 780M378 750L425 718L435 750Q465 750 465 770L440 770L438 780L395 780Z",
      "M618 660L660 640L695 660L712 735L640 770Q630 770 627 755ZM660 640L672 668L695 660M655 697L645 712L658 720M682 693L690 705L682 715M667 690L668 728",
      "M770 780Q775 750 795 745L795 725L815 740L800 762L798 755Q780 760 780 780",
      "M745 505L850 485L940 447L960 455M745 505Q740 515 778 665Q785 675 795 673L885 642L978 615L960 455L850 490L885 642M755 515L788 670M785 545L825 535Q835 540 827 546L790 556ZM870 505L882 520L890 505L898 518L905 498M907 497L940 492Q948 498 940 503L910 508ZM890 537L945 525Q950 532 942 537L895 545ZM892 565L948 552Q955 557 948 562L897 573ZM900 595L930 588Q935 595 928 598L903 603Z",
      "M938 395L950 388L1045 515Q1045 525 1035 522ZM950 385L985 425L992 420L960 375Z",
      "M1000 648L1022 668L1012 668L1016 682L1010 685L1005 672L998 680Z",
      "M905 715Q910 705 935 712Q945 695 960 715L1015 728Q1020 735 1010 738L960 732Q945 745 930 735Q908 735 905 715M900 765L1005 755Q1020 762 1015 780",
      "M1050 460Q1045 470 1060 473L1085 470Q1150 480 1160 410Q1165 370 1155 345Q1140 355 1140 365Q1075 350 1072 405Q1045 440 1050 460M1065 440L1080 470M1072 405Q1095 450 1115 470M1115 360Q1150 370 1160 415M1140 355L1160 385",
      "M1100 30Q1110 0 1115 40M1105 50Q1105 25 1115 25Q1145 45 1120 130L1110 155Q1100 180 1115 178L1165 182Q1185 170 1178 145L1122 138M1120 130L1105 50M1125 10Q1165 10 1190 70Q1185 20 1185 0M1140 85Q1120 60 1125 30Q1150 40 1160 70Q1150 90 1140 85M1178 145Q1180 110 1200 90L1250 40Q1250 30 1240 35L1205 70L1230 0M1210 0L1205 60",
      "M1180 235Q1185 150 1235 105Q1260 90 1290 115Q1330 145 1370 135Q1405 150 1395 200Q1385 280 1375 315Q1350 335 1330 300Q1320 240 1265 240L1225 262Q1185 265 1180 235M1245 140L1255 125L1268 125L1270 140Q1285 142 1285 155L1270 158L1265 175L1252 170L1250 158ZM1308 160Q1315 150 1320 160L1310 190Q1300 195 1302 180Z",
      "M1235 275Q1240 250 1270 255Q1290 270 1285 300Q1270 315 1262 300L1268 290Q1265 280 1250 290ZM1208 310L1275 350M1210 310Q1225 300 1278 340L1272 350Q1225 345 1210 320ZM1210 320L1188 385Q1185 405 1230 418Q1250 415 1262 370L1272 350M1265 370Q1285 370 1280 395Q1265 415 1250 405",
      "M1060 520Q1060 512 1070 510L1085 508L1088 498L1120 500L1125 508L1145 502Q1153 505 1155 515L1158 570Q1155 580 1147 580L1075 595Q1068 592 1067 580ZM1097 518L1110 514",
      "M1182 530Q1185 490 1205 490Q1235 500 1238 550Q1250 590 1240 605Q1225 620 1210 595Q1180 560 1182 530M1195 560L1208 520L1235 555M1195 570Q1212 540 1240 565M1265 450Q1280 425 1300 437Q1315 460 1300 500Q1285 545 1268 557Q1250 560 1252 530ZM1255 500L1280 455L1298 500M1255 515Q1280 480 1298 515",
      "M1335 385Q1340 355 1380 350Q1410 340 1435 300Q1455 290 1460 330Q1455 370 1445 385Q1455 430 1395 432Q1360 440 1345 430Q1330 420 1335 385M1395 375Q1420 365 1452 368M1395 375L1395 425M1345 415Q1350 395 1390 395M1345 415L1390 418M1358 437L1330 502L1322 498L1348 432M1392 432L1400 500L1410 498L1408 425M1422 428L1450 492L1456 488L1435 420",
      "M1300 5Q1300 70 1295 75Q1300 88 1320 82L1325 65Q1305 65 1315 45M1345 40Q1350 80 1360 80Q1385 80 1382 60L1372 50M1385 20Q1395 50 1410 55Q1420 40 1418 0M1458 0L1462 40L1545 38L1545 0",
      "M1488 160Q1490 140 1505 140Q1520 145 1522 170L1520 205Q1510 220 1495 205ZM1475 190Q1470 245 1510 245Q1545 240 1540 190M1480 190Q1480 235 1510 235Q1530 235 1532 190M1512 248L1520 278L1525 275L1520 245",
      "M1318 597L1390 630L1340 735L1330 735L1292 712ZM1308 642L1378 642M1390 630L1410 600M1390 630L1418 635M1390 630L1400 658M1390 630L1385 600M1390 630L1375 650",
      "M1060 730Q1045 620 1120 610Q1190 620 1197 720Q1185 740 1170 735L1120 770L1075 740ZM1110 640Q1060 680 1065 720Q1080 740 1080 740M1110 640Q1130 670 1160 660Q1180 680 1170 690L1160 690Q1155 730 1120 750M1120 713Q1130 720 1140 710M1080 740L1095 770",
      drop(1380, 717, 22), "M1190 750L1275 733L1285 760L1310 755L1312 780M1190 750L1195 780M1395 780Q1400 750 1430 755L1460 765M1490 740Q1495 690 1525 685Q1558 690 1556 730M1490 740L1488 780M1500 720Q1510 695 1525 697Q1545 700 1556 720M1530 605L1556 608M1525 620Q1518 640 1530 655L1556 660M1556 430L1530 490Q1505 490 1502 520Q1510 555 1556 560M1558 365Q1530 380 1558 398",
      "M0 135L12 150L0 150M0 300Q40 320 38 360Q35 400 0 418M0 312Q28 330 28 360Q25 395 0 405M0 640Q40 660 28 690L0 698M0 738L50 700M50 700Q55 680 65 688Q90 720 85 780M50 700Q45 740 62 780M62 720Q75 730 72 755L65 755Z",
      "M570 750L580 740L592 740L600 750L612 755L610 780M570 750L562 765L568 780",
    ],
  },
  {
    // upper middle, drawn 1:1
    t: "",
    dots: "302 78 3,318 84 2,306 112 3,330 96 4,344 80 3,300 142 4,332 128 2,346 112 3,288 168 3,264 176 4,252 206 3,316 172 3,336 160 2,346 176 3,300 196 4,352 198 3,262 196 2,278 208 3,312 212 2,376 206 3,398 190 4,424 208 3,452 188 2,436 196 4,468 212 3,492 196 3,506 182 2,480 184 4,430 180 2,456 208 2,404 176 3,384 180 2,228 208 2,212 180 3,244 190 3,500 212 2,578 190 3,588 206 4,572 212 2,598 180 2,594 150 3",
    paths: [
      "M284 122L304 92Q312 86 318 94L336 120Q340 126 332 128L296 146Q288 148 286 140ZM298 114Q306 108 312 114M302 126L316 120",
      star(322, 150, 9), heart(344, 142, 7), spark(274, 160, 11), cloud(330, 186, 13), spark(292, 212, 9), star(414, 192, 8), heart(442, 214, 7), spark(484, 206, 9, 10), heart(586, 172, 6),
      "M346 92Q352 82 362 90L368 108Q364 118 354 114Z",
      "M264 190L290 182Q298 184 294 190L268 198Q260 196 264 190M206 200Q212 192 222 198L228 214M238 212Q242 198 254 202Q264 208 260 220",
      // strip left of the origin, visible where the pattern is shifted
      "M-10 76L0 72M-10 160Q-4 150 0 138M-10 262Q-4 256 0 255M-10 350L0 346M-10 374L0 370M-10 402L0 400M-10 498Q-4 492 0 493M-10 546L0 545M-10 566L0 564M-10 572L0 572M-10 618L0 620M-10 660L0 661M-10 780L0 778M-10 790L0 789M-10 822Q-6 812 0 810M-10 838Q-6 848 0 849M-10 925L0 923M-10 958L0 956",
    ],
  },
  {
    t: "",
    dots: "-4 100 2,-6 120 3,-3 190 2,-5 225 3,-4 290 2,-6 320 3,-3 430 2,-5 470 3,-4 520 2,-5 595 3,-4 640 2,-5 690 2,-4 740 3,-6 870 2,-4 900 3,-5 940 2",
    paths: [],
  },
];

function Doodles({ transform }: { transform: string }) {
  return (
    <svg className="absolute inset-0 h-full w-full" fill="none" stroke="#dad0c7" strokeWidth="1.25" strokeLinejoin="round" strokeLinecap="round" aria-hidden="true">
      <g transform={transform} className="[&_*]:[vector-effect:non-scaling-stroke]">
        {PATCHES.map((p, i) => (
          <g key={i} transform={p.t || undefined}>
            {p.dots.split(",").map((s, k) => {
              const [x, y, r] = s.trim().split(" ");
              return <circle key={k} cx={x} cy={y} r={r} />;
            })}
            <path d={p.paths.join("")} />
          </g>
        ))}
      </g>
    </svg>
  );
}

/* ---------- icons ---------- */
const SearchIcon = ({ className }: { className: string }) => (
  <svg viewBox="0 0 24 24" className={className} fill="currentColor">
    <path d="M15.5 14h-.79l-.28-.27A6.471 6.471 0 0 0 16 9.5 6.5 6.5 0 1 0 9.5 16c1.61 0 3.09-.59 4.23-1.57l.27.28v.79l5 4.99L20.49 19l-4.99-5zm-6 0C7.01 14 5 11.99 5 9.5S7.01 5 9.5 5 14 7.01 14 9.5 11.99 14 9.5 14z" />
  </svg>
);
const DotsIcon = ({ className }: { className: string }) => (
  <svg viewBox="0 0 24 24" className={className} fill="currentColor">
    <path d="M12 8c1.1 0 2-.9 2-2s-.9-2-2-2-2 .9-2 2 .9 2 2 2zm0 2c-1.1 0-2 .9-2 2s.9 2 2 2 2-.9 2-2-.9-2-2-2zm0 6c-1.1 0-2 .9-2 2s.9 2 2 2 2-.9 2-2-.9-2-2-2z" />
  </svg>
);
const ClipIcon = ({ className }: { className: string }) => (
  <svg viewBox="0 0 24 24" className={className} fill="currentColor">
    <path d="M17 6v11.5c0 2.500-2 4.500-4.500 4.500S8 20 8 17.500V5.500a3 3 0 0 1 6 0V15.500c0 .9-.7 1.500-1.500 1.500S11 16.400 11 15.500V6H9.500v9.500a3 3 0 0 0 6 0V5.500a4.500 4.500 0 0 0-9 0v12a6 6 0 0 0 12 0V6z" />
  </svg>
);
const DonutIcon = ({ className }: { className: string }) => (
  <svg viewBox="0 0 24 24" className={className} fill="none" stroke="currentColor" strokeWidth="3">
    <circle cx="12" cy="12" r="8.500" pathLength="100" strokeDasharray="29 4.333" strokeDashoffset="-27.200" />
  </svg>
);
const ChatIcon = ({ className }: { className: string }) => (
  <svg viewBox="0 0 24 24" className={className} fill="currentColor">
    <path d="M20 2H4c-1.100 0-1.990.9-1.990 2L2 22l4-4h14c1.100 0 2-.9 2-2V4c0-1.100-.9-2-2-2zM6 9h12v2H6V9zm8 5H6v-2h8v2zm4-6H6V6h12v2z" />
  </svg>
);
const SmileIcon = ({ className }: { className: string }) => (
  <svg viewBox="0 0 36 36" className={className}>
    <circle cx="18" cy="18" r="16.300" fill="none" stroke="currentColor" strokeWidth="3.200" />
    <circle cx="11.700" cy="13.500" r="2.800" fill="currentColor" />
    <circle cx="24.300" cy="13.500" r="2.800" fill="currentColor" />
    <path d="M9.500 21.300H26.500Q24.500 28 18 28Q11.500 28 9.500 21.300Z" fill="currentColor" />
  </svg>
);
const MicIcon = ({ className }: { className: string }) => (
  <svg viewBox="0 0 24 36" className={className}>
    <rect x="6.800" y="0" width="10.400" height="22" rx="5.200" fill="currentColor" />
    <path d="M1.500 16.500C1.500 31.500 22.500 31.500 22.500 16.500M12 27.500V36" fill="none" stroke="currentColor" strokeWidth="3.200" />
  </svg>
);

const Avatar = ({ className }: { className: string }) => (
  <div className={`flex shrink-0 items-center justify-center rounded-full pt-px font-['Roboto',sans-serif] font-medium leading-none text-white ${className}`}>M</div>
);

function Bubble({ text, time, mine, className }: { text: string; time: string; mine?: boolean; className: string }) {
  return (
    <div
      className={`relative flex shrink-0 items-start rounded-[11px] pl-[9px] text-[#222] shadow-[0_1px_1px_rgba(0,0,0,0.13)] ${mine ? "self-end bg-[#dcf8c6]" : "self-start bg-white"} ${className}`}
    >
      <span className="mt-[10px] whitespace-nowrap leading-[20px]">{text}</span>
      <span className="ml-[10px] mt-[20px] whitespace-nowrap text-[11.500px] leading-[14px] tracking-[-0.400px] text-[#999]">{time}</span>
    </div>
  );
}

export default function App() {
  return (
    <div className="relative flex h-[1018px] w-[1504px] items-start overflow-hidden border-t border-[#6d696b] bg-white font-['Noto_Sans','Open_Sans',sans-serif]">
      {/* first window: conversation */}
      <section className="flex h-[1017px] w-[606px] shrink-0 flex-col overflow-hidden">
        <header className="flex h-[65px] shrink-0 items-center border-b border-[#cfcfd1] bg-[#ededed] pl-[9px]">
          <Avatar className="h-[43px] w-[43px] bg-[#00897b] text-[22.500px]" />
          <h1 className="ml-4 mt-[3px] grow whitespace-nowrap text-[18px] tracking-[-0.170px] text-[#111]">MIKAEL SOUZA DA SILVA</h1>
          <div className="flex shrink-0 items-center text-[#919191]">
            <SearchIcon className="h-[22px] w-[22px]" />
            <ClipIcon className="h-[22px] w-[22px]" />
            <DotsIcon className="-mr-[6px] h-[22px] w-[22px]" />
          </div>
        </header>
        <div className="relative flex grow flex-col overflow-hidden bg-[#e5ddd6] pl-[25px] pr-[11px] pt-[21px]">
          <Doodles transform="translate(0 -66)" />
          <Bubble mine text="Oi" time="12:04" className="h-[38px] w-[70px] text-[14.600px] tracking-[-0.100px]" />
          <Bubble mine text="Tudo bem?" time="12:04" className="mt-[11px] h-[38px] w-[130px] text-[14.600px] tracking-[-0.130px]" />
          <Bubble text="Tudo sim! Funcionando!" time="12:04" className="mt-[11px] h-[38px] w-[216px] text-[14.600px] tracking-[-0.110px]" />
        </div>
        <footer className="flex h-[47px] shrink-0 items-start overflow-hidden bg-[#ededed] pl-[18px] text-[#919191]">
          <SmileIcon className="mt-4 h-9 w-9 shrink-0" />
          <div className="ml-[25px] mt-3 flex h-[46px] w-[462px] shrink-0 items-center rounded-full bg-white pl-4 font-['Liberation_Sans',sans-serif] text-[16.200px] text-[#777]">
            Digite uma mensagem
          </div>
          <MicIcon className="ml-[31px] mt-4 h-9 w-6 shrink-0" />
        </footer>
      </section>

      {/* second window: conversation list */}
      <section className="flex h-[1008px] w-[334px] shrink-0 flex-col bg-white">
        <header className="flex h-[64px] shrink-0 items-center bg-[#ededed] pl-3 text-[#919191]">
          <Avatar className="h-[43px] w-[43px] bg-[#00897b] text-[22.500px]" />
          <div className="ml-auto mr-[28px] flex items-center gap-[25px]">
            <DonutIcon className="h-[18px] w-[18px]" />
            <ChatIcon className="h-[18px] w-[18px]" />
            <DotsIcon className="h-[18px] w-[18px]" />
          </div>
        </header>
        <div className="flex h-[55px] shrink-0 items-start border-b border-[#ececec] bg-[#f6f6f6] pl-3 pt-[6px]">
          <div className="flex h-[42px] w-[306px] items-center rounded-full bg-white pl-[10px] text-[#919191]">
            <SearchIcon className="h-[18px] w-[18px] shrink-0" />
            <div className="ml-[13px] w-[238px] overflow-hidden whitespace-nowrap font-['Roboto',sans-serif] text-[14px] font-medium tracking-[0.080px] text-[#7d7d7d]">
              Procurar ou começar uma nova conversa
            </div>
          </div>
        </div>
        <article className="flex h-[75px] shrink-0 pl-3">
          <Avatar className="mt-[10px] h-[54px] w-[54px] bg-[#ab47bc] text-[27.500px]" />
          <div className="ml-4 grow border-b border-[#ececec] pt-[14px]">
            <div className="flex items-center justify-between pr-4">
              <h2 className="whitespace-nowrap text-[18px] leading-[27px] tracking-[-0.380px] text-black">Mikael Souza</h2>
              <time className="text-[13px] tracking-[-0.500px] text-[#999]">12:04</time>
            </div>
            <p className="text-[14px] leading-[18px] tracking-[0.120px] text-[#999]">Tudo sim! Funcionando!</p>
          </div>
        </article>
      </section>

      {/* third window: conversation, cut by the right edge */}
      <section className="flex h-[1008px] w-[564px] shrink-0 flex-col overflow-hidden border-l border-[#d9d9db]">
        <header className="flex h-[64px] shrink-0 items-center border-b border-[#cfcfd1] bg-[#ededed] pl-4">
          <Avatar className="h-[43px] w-[43px] bg-[#ab47bc] text-[22.500px]" />
          <h1 className="ml-4 mt-[3px] grow whitespace-nowrap text-[18px] tracking-[-0.380px] text-[#111]">Mikael Souza</h1>
          <SearchIcon className="-mr-2 mt-[-2px] h-[22px] w-[22px] shrink-0 text-[#919191]" />
        </header>
        <div className="relative flex grow flex-col overflow-hidden bg-[#e5ddd6] pl-8 pt-[22px]">
          <Doodles transform="translate(7.5 -62.500) scale(.986)" />
          <Bubble text="Oi" time="12:04" className="h-[37px] w-[69px] text-[14.400px] tracking-[-0.100px]" />
          <Bubble text="Tudo bem?" time="12:04" className="mt-[11px] h-[37px] w-[128px] text-[14.500px] tracking-[-0.110px]" />
          <Bubble mine text="Tudo sim! Funcionando!" time="12:04" className="-mr-[33px] mt-[11px] h-[38px] w-[213px] text-[14.500px] tracking-[-0.110px]" />
        </div>
        <footer className="flex h-[46px] shrink-0 items-start overflow-hidden bg-[#ededed] pl-[25px] text-[#919191]">
          <SmileIcon className="mt-[15px] h-9 w-9 shrink-0" />
          <div className="ml-[25px] mt-3 flex h-[44px] w-[457px] shrink-0 items-center rounded-full bg-white pl-4 font-['Liberation_Sans',sans-serif] text-[16px] text-[#777]">
            Digite uma mensagem
          </div>
        </footer>
      </section>

      {/* taskbar fragment showing under the windows */}
      <div className="absolute bottom-0 left-[628px] h-[9px] w-[61px] overflow-hidden bg-[#363636]">
        <svg viewBox="0 0 61 9" className="h-[9px] w-[61px]" fill="none" stroke="#e6e6e6" strokeWidth="1.500">
          <path d="M22 1l2 1 .5 1.500-2 2.500 1.500 3M25 1.500l3 0 1-1.500M38 1l-2 1-.5 1.500 2 2.500-1.500 3M35 1.500l-3 0-1-1.500" />
          <circle cx="30" cy="6" r="2" />
          <path d="M60 7v2" stroke="#2f6fb5" />
        </svg>
      </div>
    </div>
  );
}
